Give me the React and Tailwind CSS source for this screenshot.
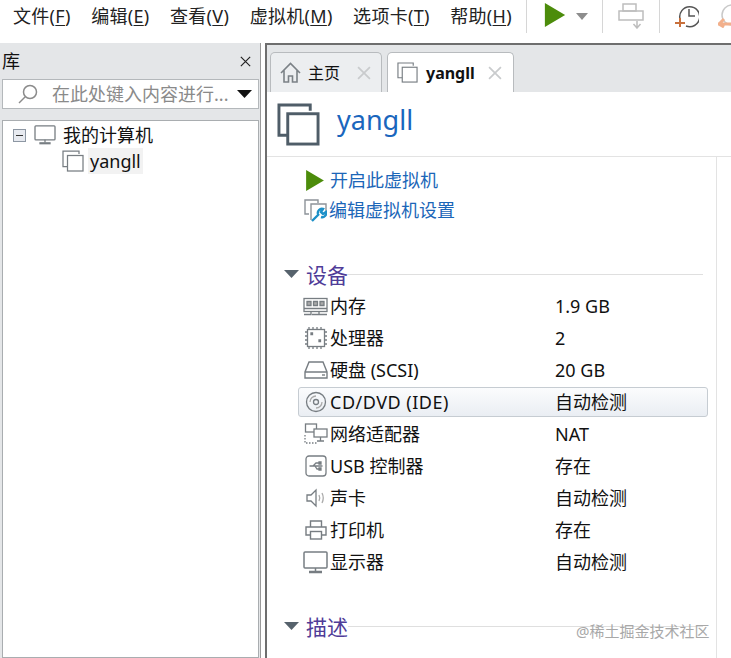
import React from 'react';

const menus = [
  ['文件(', 'F', ')'],
  ['编辑(', 'E', ')'],
  ['查看(', 'V', ')'],
  ['虚拟机(', 'M', ')'],
  ['选项卡(', 'T', ')'],
  ['帮助(', 'H', ')'],
];

// stacked windows icon used for the vm
function VmIcon({ size, stroke, color = '#56626c' }) {
  return (
    <svg width={size} height={size} viewBox="0 0 44 44" fill="none" stroke={color} strokeWidth={stroke}>
      <path d="M12 33H2V2h32v6" />
      <rect x="11" y="11" width="31" height="31" fill="#fff" />
    </svg>
  );
}

function Play({ w, h }) {
  return (
    <svg width={w} height={h} viewBox="0 0 22 26">
      <path d="M0 0L22 13L0 26Z" fill="#4c8c0b" />
    </svg>
  );
}

function Caret({ color = '#56626c', w = 15, h = 8 }) {
  return (
    <svg width={w} height={h} viewBox="0 0 15 8" preserveAspectRatio="none">
      <path d="M0 0H15L7.5 8Z" fill={color} />
    </svg>
  );
}

function X({ size = 13, color = '#c9cbcd', width = 1.6 }) {
  return (
    <svg width={size} height={size} viewBox="0 0 13 13" stroke={color} strokeWidth={width} fill="none">
      <path d="M1 1L12 12M12 1L1 12" />
    </svg>
  );
}

const g = '#777d82';

const MemoryIcon = () => (
  <svg width="25" height="20" viewBox="0 0 25 20" fill="none" stroke={g} strokeWidth="1.3">
    <rect x="1" y="2.5" width="23" height="13" />
    <path d="M1 12.5h23M9 18.5h7M1 18.5h7v-3M24 18.5h-8v-3" />
    <path d="M4 5.5h4v4H4zM10.500 5.500h4v4h-4zM17 5.500h4v4h-4z" fill="#aaa" />
  </svg>
);

const CpuIcon = () => (
  <svg width="24" height="24" viewBox="0 0 24 24" fill="none" stroke={g} strokeWidth="1.3">
    <rect x="3.500" y="3.500" width="17" height="17" />
    <path strokeDasharray="2 2" d="M5 1v2M9 1v2M13 1v2M17 1v2M5 21v2.500M9 21v2.500M13 21v2.500M17 21v2.500M1 6h2M1 10h2M1 14h2M1 18h2M21 6h2.500M21 10h2.500M21 14h2.500M21 18h2.500" />
    <path d="M7 7h1.500v1.500H7zM15 14h1.500v1.500H15z" fill={g} />
  </svg>
);

const DiskIcon = () => (
  <svg width="24" height="20" viewBox="0 0 24 20" fill="none" stroke={g} strokeWidth="1.4">
    <path d="M5 2h14l4 10v6H1v-6zM1 12h22" />
    <path d="M18 15h3" />
  </svg>
);

const CdIcon = () => (
  <svg width="22" height="22" viewBox="0 0 22 22" fill="none" stroke={g} strokeWidth="1.3">
    <circle cx="11" cy="11" r="9.500" />
    <circle cx="11" cy="11" r="2.500" />
    <path d="M5 11a6 6 0 0 1 6-6M17 11a6 6 0 0 1-6 6" stroke="#aaa" />
  </svg>
);

const NetIcon = () => (
  <svg width="24" height="22" viewBox="0 0 24 22" fill="none" stroke={g} strokeWidth="1.3">
    <rect x="1.500" y="1" width="11" height="8" />
    <rect x="10" y="6" width="13" height="8" fill="#fff" />
    <path d="M16.500 14v4M13 18h7" />
    <path d="M1 12v8h13" strokeDasharray="1.500 1.500" />
  </svg>
);

const UsbIcon = () => (
  <svg width="22" height="22" viewBox="0 0 22 22" fill="none" stroke={g} strokeWidth="1.3">
    <rect x="1" y="1" width="20" height="20" rx="3" />
    <path d="M4.500 11h13M8 11l3-3h3M10 11l2 3h2" />
    <path d="M14 7h2v2h-2zM14 13h2v2h-2z" fill={g} />
  </svg>
);

const SpeakerIcon = () => (
  <svg width="22" height="20" viewBox="0 0 22 20" fill="none" stroke={g} strokeWidth="1.3">
    <path d="M2 7h4l5-5v16l-5-5H2z" />
    <path d="M14 7c1 2 1 4 0 6M17 5c1.500 3 1.500 7 0 10" stroke="#aaa" />
  </svg>
);

const PrinterIcon = () => (
  <svg width="22" height="20" viewBox="0 0 22 20" fill="none" stroke={g} strokeWidth="1.4">
    <path d="M5.500 7V1h11v6M5 15H1V7h20v8h-4" />
    <rect x="5.500" y="11.500" width="11" height="7.500" />
  </svg>
);

const MonitorIcon = ({ w = 25, h = 23, color = g }) => (
  <svg width={w} height={h} viewBox="0 0 25 23" fill="none" stroke={color} strokeWidth="1.500">
    <rect x="1" y="1" width="23" height="16" rx="1" />
    <path d="M12.500 17v3" />
    <path d="M6 21h13" strokeWidth="2.500" />
  </svg>
);

const devices = [
  { Icon: MemoryIcon, name: '内存', value: '1.9 GB' },
  { Icon: CpuIcon, name: '处理器', value: '2' },
  { Icon: DiskIcon, name: '硬盘 (SCSI)', value: '20 GB' },
  { Icon: CdIcon, name: 'CD/DVD (IDE)', value: '自动检测', selected: true },
  { Icon: NetIcon, name: '网络适配器', value: 'NAT' },
  { Icon: UsbIcon, name: 'USB 控制器', value: '存在' },
  { Icon: SpeakerIcon, name: '声卡', value: '自动检测' },
  { Icon: PrinterIcon, name: '打印机', value: '存在' },
  { Icon: MonitorIcon, name: '显示器', value: '自动检测' },
];

function SectionTitle({ text }) {
  return (
    <div className="flex items-center h-[28px]">
      <div className="w-[15px] ml-[17px] flex shrink-0"><Caret /></div>
      <span className="ml-[7px] mt-[2px] shrink-0 whitespace-nowrap text-[21px] leading-none text-[#4f3c98]">{text}</span>
      <div className="w-[355px] shrink-0 h-px bg-[#dfdfdf]"></div>
    </div>
  );
}

function App() {
  return (
    <div
      className="relative w-[731px] h-[658px] overflow-hidden bg-white text-[#111] flex flex-col"
      style={{ fontFamily: '"Noto Sans", "Noto Sans CJK SC", sans-serif' }}
    >
      {/* menu bar */}
      <div className="h-[43px] flex shrink-0">
        <div className="flex items-center h-[31px] pl-[13px] gap-[20.5px] text-[18px] leading-none tracking-[0.3px] text-[#222]">
          {menus.map((m) => (
            <span key={m[1]} className="whitespace-nowrap">
              {m[0]}<span className="underline underline-offset-2">{m[1]}</span>{m[2]}
            </span>
          ))}
        </div>
        <div className="ml-[14px] h-[33px] w-px bg-[#d6d6d6] shrink-0"></div>
        <div className="ml-[17px] mt-[3px] flex items-start shrink-0"><Play w={22} h={24} /></div>
        <div className="ml-[10px] mt-[13px] shrink-0"><Caret color="#8d8d8d" w={12} h={7} /></div>
        <div className="ml-[14px] h-[33px] w-px bg-[#d6d6d6] shrink-0"></div>
        <div className="ml-[15px] mt-[3px] shrink-0">
          <svg width="26" height="26" viewBox="0 0 26 26" fill="none" stroke="#bdbdbd" strokeWidth="1.500">
            <rect x="5" y="1" width="13" height="7" />
            <rect x="1" y="8" width="24" height="9" />
            <path d="M19 18v6M15.500 21l3.500 4 3.500-4" />
          </svg>
        </div>
        <div className="ml-[15px] h-[33px] w-px bg-[#d6d6d6] shrink-0"></div>
        <div className="ml-[15px] mt-[4px] shrink-0">
          <svg width="24" height="24" viewBox="0 0 24 24" fill="none">
            <path d="M5 15A10 10 0 1 1 11 22" stroke="#555" strokeWidth="1.500" />
            <path d="M14 5v7h6" stroke="#555" strokeWidth="1.500" />
            <path d="M5 14v9M0 19h10" stroke="#c8703c" strokeWidth="2" />
          </svg>
        </div>
        <div className="ml-[19px] mt-[4px] shrink-0">
          <svg width="24" height="24" viewBox="0 0 24 24" fill="none">
            <circle cx="14" cy="11" r="10" stroke="#c9c9c9" strokeWidth="1.500" />
            <path d="M14 5v7h6" stroke="#c9c9c9" strokeWidth="1.500" />
            <path d="M0 20h16M6 15l-5 5 5 3" stroke="#f2b08c" strokeWidth="3" />
          </svg>
        </div>
      </div>

      <div className="flex flex-1 min-h-0">
        {/* library panel */}
        <div className="w-[261px] shrink-0 bg-[#e4e6e8] border-r border-[#9a9a9a] flex flex-col pl-[2px] pr-[1px]">
          <div className="h-[36px] flex items-center justify-between pr-[8px] shrink-0">
            <span className="text-[18px] leading-none">库</span>
            <X size={11} color="#222" width={1.4} />
          </div>
          <div className="h-[30px] bg-white border border-[#b4b8bb] flex items-center pl-[15px] pr-[6px] shrink-0">
            <svg width="20" height="20" viewBox="0 0 20 20" fill="none" stroke="#8b8b8b" strokeWidth="1.500" className="shrink-0">
              <circle cx="12" cy="8" r="6.500" />
              <path d="M7 13L1 19" />
            </svg>
            <span className="ml-[14px] text-[18px] leading-none whitespace-nowrap text-[#8a8a8a]">在此处键入内容进行...</span>
            <div className="ml-auto flex shrink-0"><Caret color="#111" w={15} h={8} /></div>
          </div>
          <div className="mt-[11px] flex-1 bg-white border border-[#a9adb0] pt-[1px]">
            <div className="flex items-center h-[26px] pl-[10px]">
              <div className="w-[13px] h-[13px] border border-[#8d97a3] bg-[#e7eaf0] flex items-center justify-center">
                <div className="w-[7px] h-px bg-[#333]"></div>
              </div>
              <div className="ml-[8px] flex"><MonitorIcon w={22} h={20} /></div>
              <span className="ml-[7px] text-[18px] leading-none">我的计算机</span>
            </div>
            <div className="flex items-center h-[26px] pl-[59px]">
              <VmIcon size={22} stroke={2.500} color="#777d82" />
              <span className="ml-[4px] px-[2px] bg-[#f2f2f2] text-[18px] leading-[26px]">yangll</span>
            </div>
          </div>
        </div>

        {/* main area */}
        <div className="ml-[4px] flex-1 min-w-0 flex flex-col border-l-2 border-[#6e6e6e] border-t-2 border-t-[#6e6e6e]">
          <div className="h-[47px] shrink-0 bg-[#e4e6e8] flex items-end pl-[3px] gap-[5px]">
            <div className="w-[112px] h-[40px] rounded-t-[5px] border border-b-0 border-[#b8bbbe] bg-[#eceef0] flex items-center pl-[9px]">
              <svg width="21" height="21" viewBox="0 0 21 21" fill="none" stroke="#7b8186" strokeWidth="1.600">
                <path d="M1 11L10.500 1.500L20 11M4 8.500V20h4.500v-6h4v6H17V8.500" />
              </svg>
              <span className="ml-[7px] text-[16px] leading-none">主页</span>
              <div className="ml-[17px] flex"><X size={14} /></div>
            </div>
            <div className="w-[127px] h-[40px] rounded-t-[5px] border border-b-0 border-[#b8bbbe] bg-white flex items-center pl-[9px]">
              <VmIcon size={21} stroke={2.400} color="#777d82" />
              <span className="ml-[8px] text-[16px] leading-none font-bold">yangll</span>
              <div className="ml-[13px] flex"><X size={14} /></div>
            </div>
          </div>

          <div className="h-[65px] shrink-0 border-b border-[#e3e3e3] flex items-center pl-[10px]">
            <VmIcon size={43} stroke={3} color="#4f5d68" />
            <span className="ml-[17px] text-[27px] leading-none text-[#1a66bd] mb-[9px]">yangll</span>
          </div>

          <div className="flex-1 min-h-0 flex">
            <div className="w-[450px] shrink-0 border-r border-[#e3e3e3] pt-[8px]">
              <div className="flex items-center h-[30px] pl-[38px]">
                <Play w={20} h={21} />
                <span className="ml-[5px] text-[18px] leading-none text-[#1b66b8]">开启此虚拟机</span>
              </div>
              <div className="flex items-center h-[30px] pl-[37px]">
                <svg width="23" height="23" viewBox="0 0 23 23" fill="none" className="shrink-0">
                  <path d="M5 15H1V1h13v3" stroke="#8d9399" strokeWidth="1.400" />
                  <path d="M7 21V5h15v7" stroke="#8d9399" strokeWidth="1.400" />
                  <path d="M8 22L15 15M14 15a4 4 0 0 1 5-5l-2 3 2 2 3-2a4 4 0 0 1-5 5" stroke="#1d90c8" strokeWidth="2.400" />
                </svg>
                <span className="ml-[2px] text-[18px] leading-none text-[#1b66b8]">编辑虚拟机设置</span>
              </div>

              <div className="mt-[35px]"><SectionTitle text="设备" /></div>

              <div className="mt-[2px] pl-[34px]">
                {devices.map(({ Icon, name, value, selected }) => (
                  <div
                    key={name}
                    className={
                      selected
                        ? 'flex items-center h-[30px] my-px w-[410px] pl-[2px] -ml-[3px] rounded-[3px] border border-[#c6ccd2] bg-gradient-to-b from-[#fbfcfd] to-[#eaeef3]'
                        : 'flex items-center h-[32px] w-[410px]'
                    }
                  >
                    <div className="w-[29px] flex justify-center shrink-0"><Icon /></div>
                    <span className={selected
                      ? 'w-[225px] shrink-0 text-[18px] leading-none whitespace-nowrap tracking-[0.5px]'
                      : 'w-[225px] shrink-0 text-[18px] leading-none whitespace-nowrap'}>{name}</span>
                    <span className="text-[18px] leading-none whitespace-nowrap">{value}</span>
                  </div>
                ))}
              </div>

              <div className="mt-[34px]"><SectionTitle text="描述" /></div>
            </div>
          </div>
        </div>
      </div>

      <span className="absolute left-[576px] top-[624px] text-[15px] leading-none text-[#a8a8a8] whitespace-nowrap">@稀土掘金技术社区</span>
    </div>
  );
}

export default App;
